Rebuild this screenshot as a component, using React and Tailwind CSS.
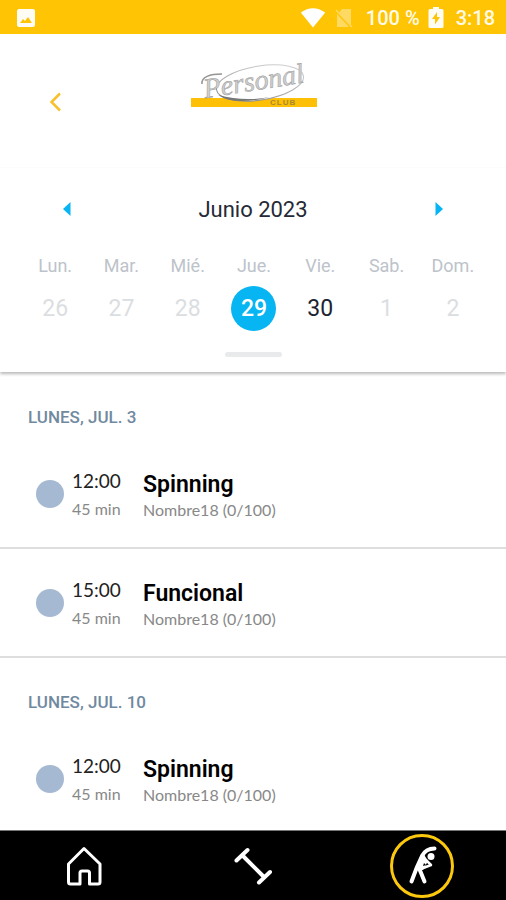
import React from "react";

const weekdays = ["Lun.", "Mar.", "Mié.", "Jue.", "Vie.", "Sab.", "Dom."];

const days = [
  { n: 26, state: "off" },
  { n: 27, state: "off" },
  { n: 28, state: "off" },
  { n: 29, state: "selected" },
  { n: 30, state: "on" },
  { n: 1, state: "off" },
  { n: 2, state: "off" },
];

const dayStyles = {
  off: "text-[#dbdee1]",
  on: "text-[#1c2330]",
  selected: "bg-[#06b5f2] font-medium text-white",
};

const sections = [
  {
    title: "LUNES, JUL. 3",
    classes: [
      { time: "12:00", name: "Spinning" },
      { time: "15:00", name: "Funcional" },
    ],
  },
  { title: "LUNES, JUL. 10", classes: [{ time: "12:00", name: "Spinning" }] },
];

function StatusBar() {
  return (
    <div className="flex h-[34px] shrink-0 items-center bg-[#ffc403] pt-[2px] pr-[11px] pl-4 text-xl font-medium text-[#fffbe8]">
      <svg className="h-5 w-5" viewBox="0 0 20 20" aria-hidden="true">
        <path
          fill="#fffdf3"
          fillRule="evenodd"
          d="M3 1h14a2 2 0 0 1 2 2v14a2 2 0 0 1-2 2H3a2 2 0 0 1-2-2V3a2 2 0 0 1 2-2ZM4 15h12l-4-6-3 4-2-2Z"
        />
      </svg>
      <svg className="ml-auto h-5 w-[26px]" viewBox="0 0 26 20" aria-hidden="true">
        <path fill="#fff" d="M.8 4.5Q13-4 25.2 4.5L13 19.5Z" />
      </svg>
      <svg className="ml-2 h-5 w-5" viewBox="0 0 20 20" aria-hidden="true">
        <path fill="#ffda63" d="M8 1h9v16L5 5ZM3 6l12 13H3Z" />
        <path d="M2 2l16 17" stroke="#ffda63" strokeWidth="1.5" />
      </svg>
      <span className="ml-3">100 %</span>
      <svg className="ml-2 h-[22px] w-4" viewBox="0 0 16 22" aria-hidden="true">
        <path
          fill="#fffdf3"
          fillRule="evenodd"
          d="M5 0h6v2h3q1.500 0 1.500 1.500v16q0 1.500-1.500 1.500H2q-1.500 0-1.500-1.500v-16Q.5 2 2 2h3ZM9 5l-5 7h3v5.500l5-7.500H9Z"
        />
      </svg>
      <span className="ml-3">3:18</span>
    </div>
  );
}

function Logo() {
  return (
    <svg className="h-[50px] w-[130px] overflow-visible" viewBox="0 0 130 50" role="img" aria-label="Personal Club">
      <defs>
        <linearGradient id="rim" x1="0" y1="1" x2="1" y2="0">
          <stop offset="0" stopColor="#717171" />
          <stop offset="0.4" stopColor="#aaa" />
          <stop offset="1" stopColor="#dadada" />
        </linearGradient>
      </defs>
      <rect x="3" y="38" width="126" height="9" fill="#fdc006" />
      <ellipse cx="72" cy="23" rx="44" ry="17" transform="rotate(-9 72 23)" fill="#fff" stroke="url(#rim)" strokeWidth="1" />
      <path d="M30 35Q47 46 82 37Q56 42 30 35Z" fill="#777" />
      <path d="M14 24C13 17 22 14 34 14" fill="none" stroke="#959595" strokeWidth="1.500" />
      <text
        transform="rotate(-9 18 38)"
        x="17"
        y="38"
        className="font-['Liberation_Serif',serif] text-[28px] italic"
        fill="#cfcfcf"
        stroke="#999"
        strokeWidth="0.5"
      >
        Personal
      </text>
      <text x="82" y="45" className="font-['Liberation_Sans',sans-serif] text-[8px] font-bold tracking-[1px]" fill="#a8882e">
        CLUB
      </text>
    </svg>
  );
}

function Header() {
  return (
    <header className="grid h-[133px] shrink-0 grid-cols-[1fr_auto_1fr] items-start pt-[26px]">
      <button type="button" aria-label="Volver" className="mt-7 ml-10 h-7 w-7">
        <svg className="h-7 w-7" viewBox="0 0 28 28" fill="none" stroke="#f8c12c" strokeWidth="2.500">
          <path d="M20 5.500L11.500 14L20 22.500" />
        </svg>
      </button>
      <Logo />
    </header>
  );
}

function MonthArrow({ label, d }) {
  return (
    <button type="button" aria-label={label} className="h-5 w-5">
      <svg className="h-5 w-5" viewBox="0 0 20 20" fill="#06b5f2">
        <path d={d} />
      </svg>
    </button>
  );
}

function Calendar() {
  return (
    <section className="relative flex h-[205px] shrink-0 flex-col border-t border-[#fcfcfc] bg-white shadow-[0_2px_3px_rgba(0,0,0,0.28)] [clip-path:inset(0_0_-8px_0)]">
      <div className="mt-7 flex h-7 items-center justify-between px-[57px]">
        <MonthArrow label="Mes anterior" d="M6 9L13.500 2V16Z" />
        <h1 className="text-[22px] leading-7 text-[#252a36]">Junio 2023</h1>
        <MonthArrow label="Mes siguiente" d="M14 9L6.500 2V16Z" />
      </div>
      <div className="mt-8 grid grid-cols-7 pr-5 pl-[22px] text-center text-lg leading-5 text-[#bdc3ca]">
        {weekdays.map((d) => (
          <span key={d}>{d}</span>
        ))}
      </div>
      <div className="mt-[10px] grid grid-cols-7 justify-items-center pr-5 pl-[22px]">
        {days.map((d) => (
          <button
            key={d.n}
            type="button"
            className={`h-[45px] w-[45px] rounded-full text-[23px] leading-[45px] ${dayStyles[d.state]}`}
          >
            {d.n}
          </button>
        ))}
      </div>
      <div className="mt-[21px] h-[5px] w-[57px] self-center rounded-full bg-[#e9eaec]" />
    </section>
  );
}

function ClassRow({ time, name }) {
  return (
    <li className="flex h-[109px] items-center border-b-2 border-[#dedede] pl-9">
      <span className="h-7 w-7 rounded-full bg-[#a6b9d3]" />
      <div className="ml-2 w-[71px] pt-[2px]">
        <p className="text-[19px] leading-7 text-[#222] font-['Lato',sans-serif]">{time}</p>
        <p className="text-base leading-7 text-[#888] font-['Lato',sans-serif]">45 min</p>
      </div>
      <div className="pt-1">
        <p className="text-[23px] leading-7 font-semibold text-black">{name}</p>
        <p className="text-base leading-[22px] text-[#888] font-['Lato',sans-serif]">Nombre18 (0/100)</p>
      </div>
    </li>
  );
}

function NavBar() {
  return (
    <nav className="grid h-[70px] shrink-0 grid-cols-3 place-items-center border-t border-[#777] bg-black">
      <a href="#inicio" aria-label="Inicio">
        <svg className="h-10 w-10" viewBox="0 0 40 40" fill="none" stroke="#fff" strokeWidth="3" strokeLinejoin="round">
          <path d="M20 2.500L36 18V36Q36 38 34 38H25.500V27Q25.500 25 23.500 25H18Q16 25 16 27V38H6.500Q4.500 38 4.500 36V18Z" />
        </svg>
      </a>
      <a href="#entrenamiento" aria-label="Entrenamiento">
        <svg className="h-10 w-10" viewBox="0 0 40 40" fill="none" stroke="#fff" strokeWidth="4" strokeLinecap="round">
          <path d="M3.500 14.500L14.500 4M26 36.500L37 26M9.500 9.500L31 31" />
        </svg>
      </a>
      <a href="#clases" aria-label="Clases" aria-current="page">
        <svg className="h-16 w-16" viewBox="0 0 64 64" fill="none" stroke="#fff" strokeLinecap="round" strokeLinejoin="round">
          <circle cx="32" cy="32" r="30.500" stroke="#fcc80e" strokeWidth="3" />
          <circle cx="41" cy="22.500" r="3.500" fill="#fff" stroke="none" />
          <path d="M44.500 14.500C38 14.500 34.500 17 32 22L27 33L21.500 47.500M29 34L34.500 47.500" strokeWidth="4" />
          <path d="M33 19L38 27L33 36L25 35Z" fill="#fff" stroke="none" />
          <path d="M36 26L41 31L32 34.500" strokeWidth="2.500" />
          <path d="M34 29L36 31L33 32Z" fill="#000" stroke="none" />
        </svg>
      </a>
    </nav>
  );
}

export default function App() {
  return (
    <div className="flex h-screen flex-col overflow-hidden bg-white font-['Roboto',sans-serif]">
      <StatusBar />
      <Header />
      <Calendar />
      <main className="min-h-0 flex-1 overflow-y-auto pt-px [scrollbar-width:none]">
        {sections.map((s) => (
          <section key={s.title}>
            <h2 className="h-[67px] pt-[34px] pl-7 text-[17px] leading-5 font-medium text-[#71899f]">{s.title}</h2>
            <ul>
              {s.classes.map((c) => (
                <ClassRow key={c.time} {...c} />
              ))}
            </ul>
          </section>
        ))}
      </main>
      <NavBar />
    </div>
  );
}
